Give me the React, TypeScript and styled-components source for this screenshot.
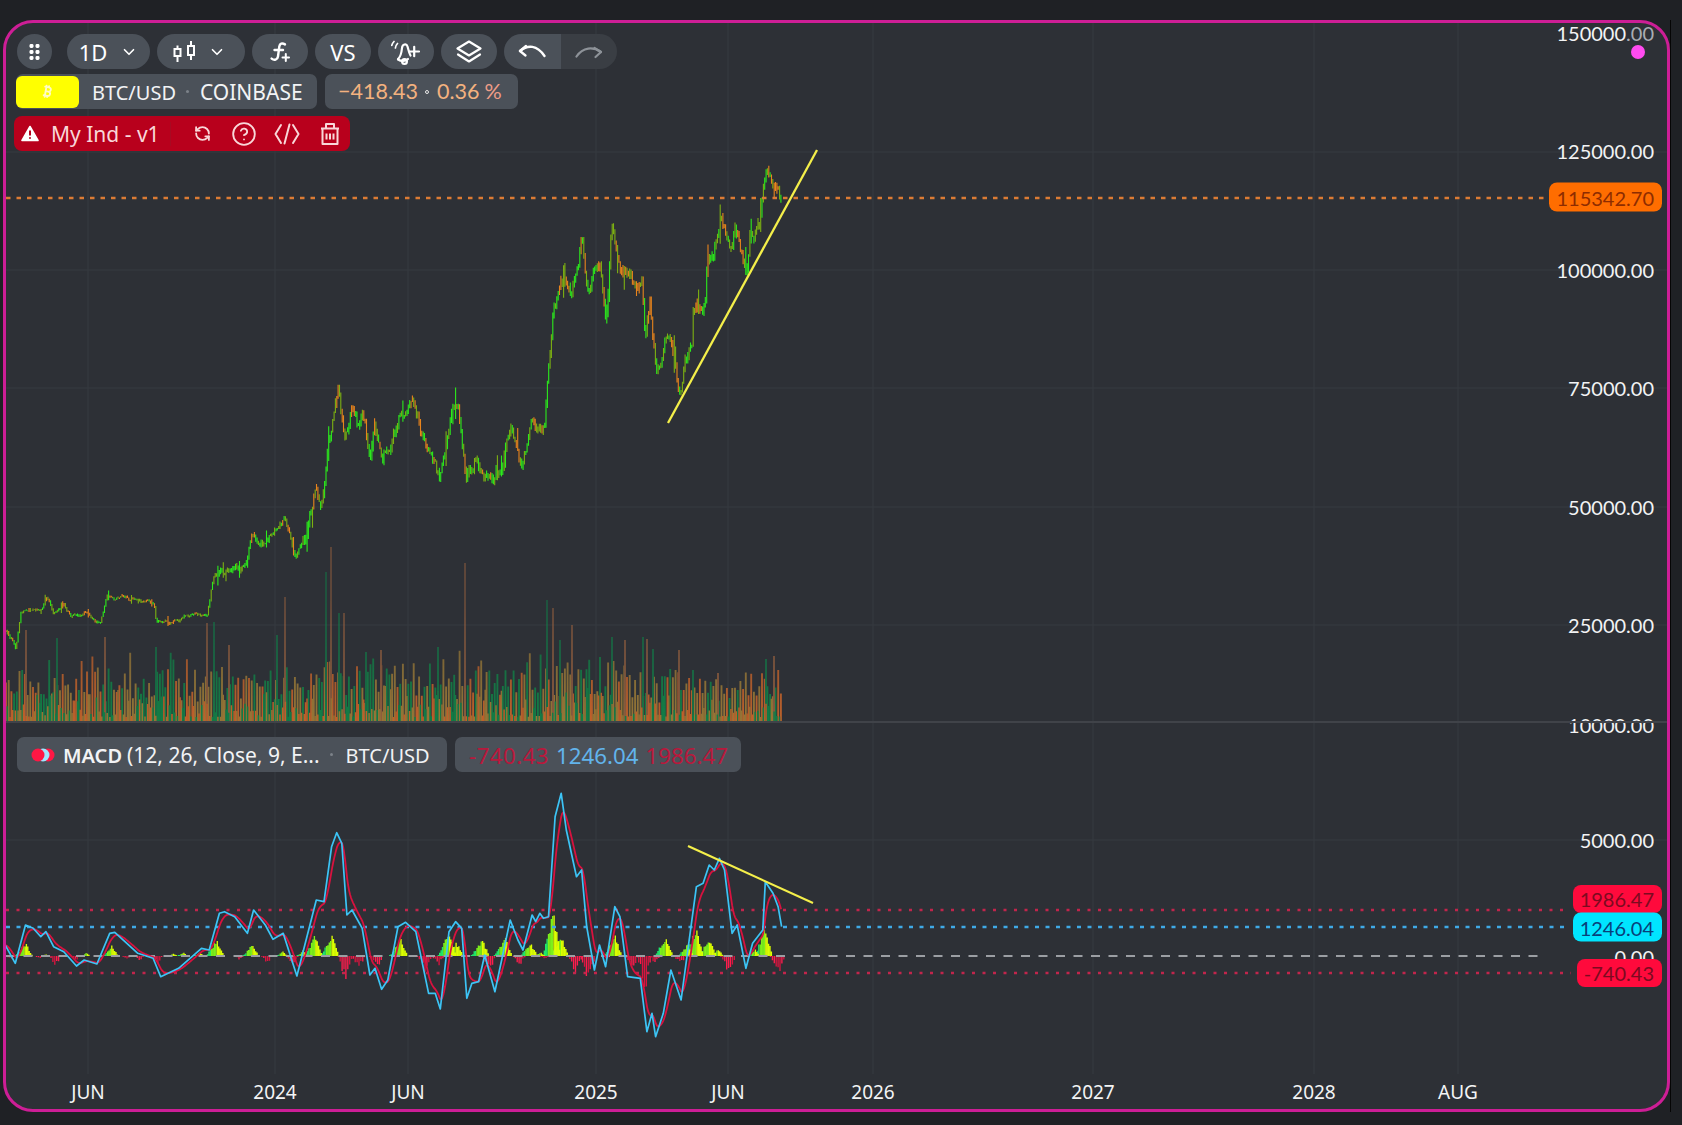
import React, { useMemo } from "react";
import styled, { createGlobalStyle } from "styled-components";
import { ChevronDown, CircleHelp, RefreshCcw, Bitcoin } from "lucide-react";

const GlobalStyle = createGlobalStyle`
  html, body { margin: 0; padding: 0; background: #1f2125; }
  #root { width: 1682px; height: 1125px; overflow: hidden; }
`;

const UI = `"Noto Sans", Roboto, sans-serif`;
const NUM = `Lato, "Noto Sans", sans-serif`;

const Page = styled.div`
  width: 1682px; height: 1125px; box-sizing: border-box;
  padding: 20px 0 0 3px;
  background: #1f2125;
`;
const Frame = styled.div`
  width: 1667px; height: 1092px;
  border-right: 1px solid #050505;
`;
const Panel = styled.main`
  width: 1667px; height: 1092px; box-sizing: border-box;
  border: 3px solid #cd1e96; border-radius: 30px;
  background: #2d3036; overflow: hidden;
  display: flex; flex-direction: column;
  color: #fff;
`;
const Pane = styled.section<{ $h: number }>`
  position: relative; height: ${(p) => p.$h}px; flex: none; width: 100%;
`;
const MacdPane = styled(Pane)`
  &::before {
    content: ""; position: absolute; left: 0; right: 0; top: -1px; height: 1.5px;
    background: #404349; z-index: 2;
  }
`;
const Canvas = styled.svg`
  position: absolute; left: 0; top: 0; width: 100%; height: 100%; display: block;
  filter: blur(0.3px);
`;
const TimeAxis = styled.footer`
  position: relative; flex: 1; width: 100%;
`;
const TimeLabel = styled.span`
  position: absolute; top: 50%; transform: translate(-50%, -50%);
  font: 400 19px/1 ${UI}; color: #f3f4f5; white-space: nowrap;
`;
const Scale = styled.div`
  position: absolute; inset: 0; pointer-events: none;
`;
const AxisLabel = styled.span`
  position: absolute; right: 13px; transform: translateY(-50%);
  font: 400 20px/1 ${NUM}; color: #f2f3f4; white-space: nowrap;
`;
const Faint = styled.span`
  color: #a9adb3;
`;
const Badge = styled.span<{ $bg: string; $fg: string; $h: number }>`
  position: absolute; right: 5px; transform: translateY(-50%);
  height: ${(p) => p.$h}px; display: flex; align-items: center;
  padding: 0 8px 0 7px; border-radius: 8px; box-sizing: border-box;
  background: ${(p) => p.$bg}; color: ${(p) => p.$fg};
  font: 400 20px/1 ${NUM};
`;
const LiveDot = styled.i`
  position: absolute; right: 22px; top: 22px; width: 14px; height: 14px;
  border-radius: 50%; background: #ff4bf0;
`;
const Overlay = styled.div`
  position: absolute; left: 11px; top: 11px;
  display: flex; flex-direction: column; align-items: flex-start;
`;
const Toolbar = styled.nav`
  display: flex; gap: 7px; align-items: center; height: 35px;
`;
const Round = styled.button<{ $w: number }>`
  all: unset; box-sizing: border-box; width: ${(p) => p.$w}px; height: 35px;
  border-radius: 18px; background: #4b5159; color: #fff;
  display: flex; align-items: center; justify-content: center; gap: 13px;
  font: 400 22px/1 ${UI};
`;
const GripButton = styled(Round)`
  margin-right: 8px;
`;
const TypeButton = styled(Round)`
  gap: 12px; padding-right: 3px;
`;
const HistoryGroup = styled.div`
  display: flex; height: 35px; border-radius: 18px; overflow: hidden;
`;
const HistoryButton = styled.button<{ $off?: boolean }>`
  all: unset; width: 56.5px; height: 35px; display: flex; align-items: center; justify-content: center;
  background: ${(p) => (p.$off ? "#3a3e44" : "#4b5159")};
  color: ${(p) => (p.$off ? "#8d9298" : "#fff")};
`;
const LegendRow = styled.div`
  display: flex; gap: 8px; margin-top: 5px; margin-left: -1px; height: 35px;
`;
const InfoPill = styled.div`
  display: flex; align-items: center; height: 35px; border-radius: 7px;
  background: #4b5159; font: 400 20px/33px ${UI}; color: #f2f3f5; white-space: nowrap;
`;
const SymbolPill = styled(InfoPill)`
  width: 301px;
`;
const SymbolChip = styled.span`
  width: 63px; height: 32px; margin-right: 13px; border-radius: 6px;
  background: #ffff00; color: #fffbc4; display: flex; align-items: center; justify-content: center;
`;
const Sep = styled.span`
  width: 3px; height: 3px; border-radius: 50%; background: #7c8289; margin: 0 11px 0 10px;
`;
const Venue = styled.span`
  font-size: 21px; padding-top: 2px;
`;
const SymbolName = styled.span`
  padding-top: 2px;
`;
const ValuePill = styled(InfoPill)`
  width: 193px; padding-left: 13px; box-sizing: border-box; font: 400 21.5px/1 ${NUM}; color: #f4b27f;
`;
const TinyDot = styled.span`
  width: 4px; height: 4px; border: 1px solid #e8e8e8; box-sizing: border-box;
  border-radius: 50%; margin: 0 8px 0 7px;
`;
const Percent = styled.span`
  color: #ee9d88; margin-left: 5px;
`;
const ErrorBar = styled.div`
  display: flex; align-items: center; height: 35px; width: 336px; box-sizing: border-box;
  margin: 7px 0 0 -3px; padding-left: 7px; border-radius: 8px;
  background: #b8001c; color: #f9d7d9; font: 400 21px/1 ${UI}; white-space: nowrap;
`;
const ErrorName = styled.span`
  margin-left: 12px; width: 119px; padding-top: 2px;
`;
const ErrorDivider = styled.span`
  width: 1px; height: 24px; background: #a80a22; margin-right: 23px;
`;
const ErrorActions = styled.div`
  display: flex; align-items: center; gap: 20px;
`;
const HelpIcon = styled(CircleHelp)`
  margin-right: -3px;
`;
const MacdLegend = styled.div`
  position: absolute; left: 11px; top: 15px; display: flex; gap: 8px;
`;
const MacdName = styled(InfoPill)`
  width: 430px; padding-left: 14px; box-sizing: border-box;
`;
const MacdIcon = styled.svg`
  width: 24px; height: 14px; margin-right: 8px; flex: none;
`;
const Strong = styled.b`
  font-weight: 600; margin-right: 5px; padding-top: 2px;
`;
const MacdParams = styled.span`
  font-size: 21px; padding-top: 2px;
`;
const MacdSymbol = styled.span`
  padding-top: 2px; margin-left: 2px;
`;
const MacdValues = styled(InfoPill)`
  width: 286px; padding-left: 14px; gap: 7px; box-sizing: border-box; font: 400 22.3px/33px ${UI};
`;
const MacdValue = styled.span<{ $c: string }>`
  color: ${(p) => p.$c}; padding-top: 2px;
`;
const NegativeValue = styled(MacdValue)`
  letter-spacing: 0.45px;
`;

function rng(seed: number) {
  let s = seed;
  return () => {
    s = (s * 1664525 + 1013904223) % 4294967296;
    return s / 4294967296;
  };
}
type P = [number, number];
function interp(pts: P[], x: number) {
  if (x <= pts[0][0]) return pts[0][1];
  for (let i = 1; i < pts.length; i++) {
    if (x <= pts[i][0]) {
      const [a, b] = pts[i - 1];
      const [c, d] = pts[i];
      return b + ((d - b) * (x - a)) / (c - a || 1);
    }
  }
  return pts[pts.length - 1][1];
}

const PRICE: P[] = [[6,632],[16,649],[21,613],[27,610],[41,610],[46,598],[54,613],[64,603],[71,617],[86,612],[100,625],[107,598],[125,598],[154,605],[156,622],[179,623],[196,612],[207,617],[214,580],[229,573],[248,563],[252,533],[259,548],[284,520],[295,557],[307,540],[314,497],[323,502],[329,443],[338,397],[345,447],[352,407],[357,430],[363,407],[370,457],[375,427],[382,470],[396,427],[400,413],[413,410],[429,453],[439,483],[452,423],[459,417],[466,483],[475,457],[493,487],[511,433],[523,460],[532,420],[545,423],[547,383],[552,337],[553,313],[560,277],[572,290],[582,233],[587,297],[600,263],[607,317],[612,230],[623,277],[642,287],[645,343],[650,297],[657,370],[668,327],[675,353],[680,390],[685,343],[692,340],[693,300],[705,300],[707,253],[713,253],[720,217],[730,247],[735,223],[747,273],[750,233],[760,227],[763,187],[767,162],[782,197]];

const SPIKES: P[] = [[26,630],[57,638],[105,637],[156,647],[207,623],[214,622],[229,645],[277,635],[285,597],[326,572],[331,547],[339,613],[344,613],[366,652],[381,650],[438,647],[465,563],[547,600],[553,608],[560,640],[572,625],[612,637],[625,640],[643,637],[647,639],[653,649],[679,650],[693,670],[718,673],[766,659],[774,656]];

const BLUE_RAW: P[] = [[10,675],[30,730],[50,615],[65,625],[80,650],[90,635],[105,680],[125,695],[150,738],[165,720],[190,732],[215,640],[225,637],[270,700],[300,715],[315,770],[350,745],[395,685],[410,690],[430,580],[440,575],[460,590],[485,640],[497,570],[520,615],[535,658],[555,640],[582,768],[620,540],[635,545],[650,380],[660,338],[670,370],[680,585],[690,570],[710,625],[725,765],[735,745],[748,808],[760,780],[780,620],[795,607],[815,635],[840,820],[853,820],[863,867],[880,635],[893,605],[905,625],[915,835],[925,790],[938,785],[950,705],[970,815],[1000,600],[1015,660],[1025,690],[1043,585],[1050,605],[1058,580],[1065,595],[1075,590],[1088,290],[1100,220],[1110,330],[1130,470],[1140,450],[1150,620],[1165,750],[1175,675],[1187,740],[1205,560],[1215,590],[1230,770],[1255,775],[1268,935],[1278,880],[1285,950],[1300,880],[1315,750],[1335,840],[1365,500],[1378,490],[1390,435],[1400,450],[1410,415],[1420,450],[1435,640],[1445,615],[1462,745],[1475,670],[1495,630],[1500,485],[1515,520],[1525,560],[1532,620]];
const BLUE: P[] = BLUE_RAW.map(([x, y]) => [x / 1.96, 720 + y / 3]);

const HIST_UP: P[] = [[50,40],[90,5],[170,10],[220,32],[340,7],[360,13],[392,12],[425,50],[495,35],[555,15],[595,18],[618,60],[650,65],[785,50],[812,4],[880,75],[895,40],[945,50],[990,55],[1040,40],[1060,12],[1085,130],[1100,60],[1205,60],[1305,60],[1348,35],[1365,85],[1390,50],[1408,22],[1480,20],[1500,80]];
const HIST_DOWN: P[] = [[22,15],[80,10],[110,30],[150,15],[250,10],[275,14],[310,22],[470,12],[525,22],[575,30],[680,90],[705,40],[740,35],[835,45],[860,32],[960,50],[1020,30],[1068,12],[1130,50],[1155,85],[1240,40],[1265,90],[1285,25],[1335,30],[1430,65],[1527,50]];

const H_GRID = [152, 270, 388, 507, 625];
const V_GRID = [88, 275, 408, 596, 728, 873, 1093, 1314, 1458];
const TIME = [["JUN",88],["2024",275],["JUN",408],["2025",596],["JUN",728],["2026",873],["2027",1093],["2028",1314],["AUG",1458]] as const;
const PRICE_LABELS = [["125000.00",151],["100000.00",269.5],["75000.00",388],["50000.00",507],["25000.00",625],["10000.00",725]] as const;

function usePriceChart() {
  return useMemo(() => {
    const r = rng(7);
    let green = "", orange = "", olive = "";
    let prev = interp(PRICE, 6);
    let walk = 0;
    for (let x = 6; x < 782; x += 1.35) {
      const y = interp(PRICE, x);
      const slope = interp(PRICE, x + 3) - y;
      const amp = x < 210 ? 2.6 : x < 300 ? 5 : 9;
      walk = walk * 0.78 + (r() - 0.5) * amp * 1.3;
      const c = y + walk;
      const long = r() < 0.12 ? amp * 1.5 : 0;
      const a = Math.min(prev, c) - r() * amp * 0.55 - (r() < 0.5 ? long : 0);
      const b = Math.max(prev, c) + r() * amp * 0.55 + long * r();
      prev = c;
      const seg = `M${x.toFixed(1)} ${a.toFixed(1)}V${b.toFixed(1)}`;
      const q = r() + (slope < 0 ? 0.3 : -0.22);
      if (q > 0.66) green += seg;
      else if (q < 0.26) orange += seg;
      else olive += seg;
    }
    const v = rng(23);
    let vg = "", vo = "", vt = "", bg = "", bo = "", bt = "";
    for (let x = 6; x < 781; x += 2.7) {
      const env = x > 690 ? 20 : 34;
      const h = 18 + v() * v() * 26 + v() * env;
      const seg = `M${x.toFixed(1)} 722V${(722 - h).toFixed(1)}`;
      const q = v();
      if (q < 0.34) vg += seg;
      else if (q < 0.62) vo += seg;
      else vt += seg;
    }
    for (let x = 7.3; x < 781; x += 2.7) {
      const h = 5 + v() * v() * (x > 690 ? 20 : 34);
      const seg = `M${x.toFixed(1)} 722V${(722 - h).toFixed(1)}`;
      const q = v();
      if (q < 0.3) bg += seg;
      else if (q < 0.68) bo += seg;
      else bt += seg;
    }
    let sg = "", so = "";
    SPIKES.forEach(([x, y], i) => {
      const seg = `M${x} 722V${y}`;
      if (i % 2) sg += seg;
      else so += seg;
    });
    return { green, orange, olive, vg, vo, vt, bg, bo, bt, sg, so };
  }, []);
}

function useMacd() {
  return useMemo(() => {
    const blue = "M" + BLUE.map(([x, y]) => `${x.toFixed(1)} ${y.toFixed(1)}`).join("L");
    const sig: string[] = [];
    let e = BLUE[0][1];
    for (let x = BLUE[0][0]; x <= 782; x += 1) {
      e += (interp(BLUE, x) - e) * 0.2;
      sig.push(`${x.toFixed(1)} ${e.toFixed(1)}`);
    }
    const r = rng(91);
    const BASE = 956;
    const segs = { g: "", l: "", y: "", red: "", dk: "" };
    const draw = (lumps: P[], dir: number) => {
      lumps.forEach(([zx, zh]) => {
        const cx = zx / 1.96;
        const h = zh / 3;
        const w = 3 + Math.min(h, 14) * (dir > 0 ? 0.4 : 0.55);
        for (let x = cx - w; x < cx + w * 0.7; x += dir > 0 ? 1.9 : 1.4) {
          const t = x < cx ? (x - (cx - w)) / w : 1 - (x - cx) / (w * 0.7);
          const bar = Math.max(1, h * t * (dir > 0 ? 0.45 + r() * 0.75 : 0.75 + r() * 0.35));
          const seg = `M${x.toFixed(1)} ${BASE}v${(dir * bar).toFixed(1)}`;
          if (dir > 0) {
            if (r() < 0.6) segs.red += seg;
            else segs.dk += seg;
          } else {
            const q = (x - (cx - w)) / (w * 1.7);
            if (q < 0.25) segs.g += seg;
            else if (q < 0.55) segs.l += seg;
            else segs.y += seg;
          }
        }
      });
    };
    draw(HIST_UP, -1);
    draw(HIST_DOWN, 1);
    return { blue, signal: "M" + sig.join("L"), ...segs };
  }, []);
}

const GripIcon = () => (
  <svg width="11" height="16" viewBox="0 0 11 16" fill="#fff">
    {[0, 6, 12].map((y) => (
      <React.Fragment key={y}>
        <rect x="0.5" y={y} width="4" height="4" rx="1.4" />
        <rect x="6.5" y={y} width="4" height="4" rx="1.4" />
      </React.Fragment>
    ))}
  </svg>
);
const CandleIcon = () => (
  <svg width="23" height="21" viewBox="0 0 23 21" fill="none" stroke="#fff" strokeWidth="2">
    <rect x="1.5" y="8" width="6" height="7" />
    <path d="M4.5 4.5V8M4.5 15v6" />
    <rect x="15" y="5" width="6" height="9" />
    <path d="M18 0v5M18 14v5" />
  </svg>
);
const FxIcon = () => (
  <svg width="22" height="22" viewBox="0 0 22 22" fill="none" stroke="#fff" strokeWidth="2.4" strokeLinecap="round">
    <path d="M16 3.4C13 1.6 10.8 2.6 10.3 5.5L9 15.5C8.6 18.8 5.2 19.6 2.6 17.6" />
    <path d="M5.5 9H14" />
    <path d="M13.5 16.5H20M16.8 13V20" strokeWidth="2" />
  </svg>
);
const BellIcon = () => (
  <svg width="30" height="30" viewBox="0 0 30 30" fill="none" stroke="#fff" strokeWidth="2.2" strokeLinecap="round" strokeLinejoin="round">
    <path d="M7 22C10 19.5 10.5 16 11 11C11.4 7 15.5 6.3 16.5 9.5C17.4 12.5 18 16 19.5 18.5" />
    <path d="M7 22.5C10 24.5 14.5 24.5 17 22" />
    <circle cx="13.5" cy="24.5" r="2.4" />
    <path d="M18.5 14.5H28M23.2 9.8V19.2" />
    <path d="M6.5 6.5C5 8 4.4 9.4 4.4 11M3 4.5C1.6 6 1 7 .8 8.4" strokeWidth="1.7" />
  </svg>
);
const LayersIcon = () => (
  <svg width="26" height="26" viewBox="0 0 26 26" fill="none" stroke="#fff" strokeWidth="2.2" strokeLinejoin="round" strokeLinecap="round">
    <path d="M13 2.5L24.5 9.5L13 16.5L1.5 9.5Z" />
    <path d="M2 15.5L13 22.5L24 15.5" />
  </svg>
);
const UndoIcon = () => (
  <svg width="28" height="18" viewBox="0 0 28 18" fill="none" stroke="currentColor" strokeWidth="2.3" strokeLinecap="round" strokeLinejoin="round">
    <path d="M2 8C10 1.5 19 2 26.5 13" />
    <path d="M2 8L8 3M2 8L7.5 12.5" />
  </svg>
);
const RedoIcon = () => (
  <svg width="28" height="18" viewBox="0 0 28 18" fill="none" stroke="currentColor" strokeWidth="2.2" strokeLinecap="round" strokeLinejoin="round">
    <path d="M1.5 13.5C8 4 18 3.5 26 9" />
    <path d="M26 9L19.5 5M26 9L20.5 14" />
  </svg>
);
const WarnIcon = () => (
  <svg width="18" height="17" viewBox="0 0 18 17">
    <path d="M9 1.5L17 15.5H1Z" fill="#fff" stroke="#fff" strokeWidth="1.6" strokeLinejoin="round" />
    <path d="M9 5.5V10.5M9 12.3V13.8" stroke="#b8001c" strokeWidth="2" />
  </svg>
);
const CodeIcon = () => (
  <svg width="26" height="24" viewBox="0 0 26 24" fill="none" stroke="#f9d7d9" strokeWidth="2" strokeLinecap="round" strokeLinejoin="round">
    <path d="M7 3L1.5 12L7 21M19 3L24.5 12L19 21M15.5 2.5L10.5 21.5" />
  </svg>
);
const TrashIcon = () => (
  <svg width="20" height="24" viewBox="0 0 20 24" fill="none" stroke="#f9d7d9" strokeWidth="2" strokeLinejoin="round">
    <path d="M1 6.5H19M6 6V2H14V6" />
    <path d="M2.5 6.5V22H17.5V6.5" />
    <path d="M6.5 11.5V17.5M10 11.5V17.5M13.5 11.5V17.5" />
  </svg>
);

const PriceChart = () => {
  const c = usePriceChart();
  return (
    <Canvas viewBox="6 23 1661 699" preserveAspectRatio="none">
      <defs>
        <linearGradient id="volFade" gradientUnits="userSpaceOnUse" x1="0" y1="722" x2="0" y2="600">
          <stop offset="0" stopColor="#fff" stopOpacity="1" />
          <stop offset="1" stopColor="#fff" stopOpacity="0.55" />
        </linearGradient>
        <mask id="volMask" maskUnits="userSpaceOnUse" x="0" y="500" width="900" height="230">
          <rect x="0" y="500" width="900" height="230" fill="url(#volFade)" />
        </mask>
      </defs>
      <g stroke="#363a40" strokeWidth="1" fill="none">
        {H_GRID.map((y) => <path key={y} d={`M6 ${y}H1667`} />)}
        {V_GRID.map((x) => <path key={x} d={`M${x} 23V722`} />)}
      </g>
      <g mask="url(#volMask)" fill="none" opacity="0.85">
        <g strokeWidth="1.9">
          <path d={c.vg} stroke="#0f8c4a" />
          <path d={c.vo} stroke="#d66a2a" />
          <path d={c.vt} stroke="#a88338" />
          <path d={c.sg} stroke="#11804a" />
          <path d={c.so} stroke="#9d6440" />
        </g>
        <g strokeWidth="1.5">
          <path d={c.bg} stroke="#0e8d4a" />
          <path d={c.bo} stroke="#dd6a28" />
          <path d={c.bt} stroke="#ac8236" />
        </g>
      </g>
      <g strokeWidth="1.1" fill="none">
        <path d={c.olive} stroke="#7cb012" />
        <path d={c.orange} stroke="#e8841c" />
        <path d={c.green} stroke="#2bea1c" />
      </g>
      <path d="M6 198H1545" stroke="#dc7b34" strokeWidth="2.6" strokeDasharray="4.5 6" fill="none" />
      <path d="M668 423L817 150" stroke="#f4ef4a" strokeWidth="2.3" fill="none" />
    </Canvas>
  );
};

const MacdChart = () => {
  const m = useMacd();
  return (
    <Canvas viewBox="6 722 1661 352" preserveAspectRatio="none">
      <g stroke="#363a40" strokeWidth="1" fill="none">
        <path d="M6 840H1667" />
        {V_GRID.map((x) => <path key={x} d={`M${x} 722V1074`} />)}
      </g>
      <g strokeWidth="1.35" fill="none">
        <path d={m.g} stroke="#1fe86a" />
        <path d={m.l} stroke="#7cf01a" />
        <path d={m.y} stroke="#dcff00" />
        <path d={m.red} stroke="#ff1d4d" />
        <path d={m.dk} stroke="#d9143f" />
      </g>
      <path d="M6 910H1567" stroke="#c2254c" strokeWidth="2.4" strokeDasharray="3 7.5" fill="none" />
      <path d="M6 927H1567" stroke="#3fa9e6" strokeWidth="2.4" strokeDasharray="4 6.5" fill="none" />
      <path d="M6 956H1540" stroke="#9b9ea3" strokeWidth="1.8" strokeDasharray="9 8.5" fill="none" />
      <path d="M6 973H1571" stroke="#c2254c" strokeWidth="2.4" strokeDasharray="3 7.5" fill="none" />
      <path d={m.signal} stroke="#d8123f" strokeWidth="1.8" fill="none" strokeLinejoin="round" />
      <path d={m.blue} stroke="#3cc4f6" strokeWidth="1.7" fill="none" strokeLinejoin="round" />
      <path d="M688 846L813 903" stroke="#f4ef4a" strokeWidth="2.1" fill="none" />
    </Canvas>
  );
};

export default function App() {
  return (
    <Page>
      <GlobalStyle />
      <Frame>
        <Panel>
          <Pane $h={699}>
            <PriceChart />
            <Scale>
              <AxisLabel style={{ top: 10 }}>150000<Faint>.00</Faint></AxisLabel>
              {PRICE_LABELS.map(([t, y]) => (
                <AxisLabel key={t} style={{ top: y - 23 }}>{t}</AxisLabel>
              ))}
              <LiveDot />
              <Badge $bg="#ff6d00" $fg="#8e2c00" $h={29} style={{ top: 174 }}>115342.70</Badge>
            </Scale>
            <Overlay>
              <Toolbar>
                <GripButton $w={35}><GripIcon /></GripButton>
                <Round $w={83}>1D<ChevronDown size={18} strokeWidth={2.2} /></Round>
                <TypeButton $w={88}><CandleIcon /><ChevronDown size={18} strokeWidth={2.2} /></TypeButton>
                <Round $w={56}><FxIcon /></Round>
                <Round $w={56}>VS</Round>
                <Round $w={56}><BellIcon /></Round>
                <Round $w={56}><LayersIcon /></Round>
                <HistoryGroup>
                  <HistoryButton><UndoIcon /></HistoryButton>
                  <HistoryButton $off><RedoIcon /></HistoryButton>
                </HistoryGroup>
              </Toolbar>
              <LegendRow>
                <SymbolPill>
                  <SymbolChip><Bitcoin size={15} strokeWidth={3} /></SymbolChip>
                  <SymbolName>BTC/USD</SymbolName><Sep /><Venue>COINBASE</Venue>
                </SymbolPill>
                <ValuePill>
                  −418.43<TinyDot />0.36<Percent>%</Percent>
                </ValuePill>
              </LegendRow>
              <ErrorBar>
                <WarnIcon />
                <ErrorName>My Ind - v1</ErrorName>
                <ErrorDivider />
                <ErrorActions>
                  <RefreshCcw size={17} strokeWidth={2.6} />
                  <HelpIcon size={26} strokeWidth={1.7} />
                  <CodeIcon />
                  <TrashIcon />
                </ErrorActions>
              </ErrorBar>
            </Overlay>
          </Pane>
          <MacdPane $h={352}>
            <MacdChart />
            <Scale>
              <AxisLabel style={{ top: 118 }}>5000.00</AxisLabel>
              <AxisLabel style={{ top: 235 }}>0.00</AxisLabel>
              <Badge $bg="#ff0a3c" $fg="#7c0a20" $h={28} style={{ top: 177 }}>1986.47</Badge>
              <Badge $bg="#00e5ff" $fg="#08407a" $h={29} style={{ top: 205 }}>1246.04</Badge>
              <Badge $bg="#ff0a3c" $fg="#7c0a20" $h={28} style={{ top: 251 }}>-740.43</Badge>
            </Scale>
            <MacdLegend>
              <MacdName>
                <MacdIcon viewBox="0 0 24 14">
                  <circle cx="17" cy="7" r="6.5" fill="#ff1744" />
                  <circle cx="12" cy="7" r="6.5" fill="#9fe6ff" />
                  <circle cx="7" cy="7" r="6.5" fill="#ff1744" />
                </MacdIcon>
                <Strong>MACD</Strong><MacdParams>(12, 26, Close, 9, E...</MacdParams><Sep /><MacdSymbol>BTC/USD</MacdSymbol>
              </MacdName>
              <MacdValues>
                <NegativeValue $c="#b9183c">-740.43</NegativeValue>
                <MacdValue $c="#62b4ec">1246.04</MacdValue>
                <MacdValue $c="#b9183c">1986.47</MacdValue>
              </MacdValues>
            </MacdLegend>
          </MacdPane>
          <TimeAxis>
            {TIME.map(([t, x]) => (
              <TimeLabel key={t + x} style={{ left: x - 6 }}>{t}</TimeLabel>
            ))}
          </TimeAxis>
        </Panel>
      </Frame>
    </Page>
  );
}
